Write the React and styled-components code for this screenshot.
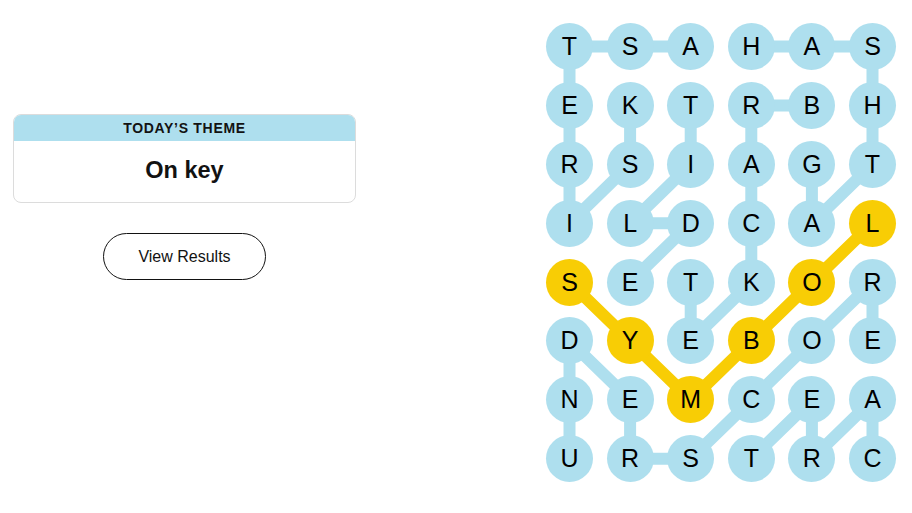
import React from 'react';
import styled, { createGlobalStyle } from 'styled-components';

const GlobalStyle = createGlobalStyle`
  body {
    margin: 0;
    background: #ffffff;
    font-family: "Liberation Sans", Arial, sans-serif;
    color: #121212;
  }
`;

const BLUE = '#aedfee';
const YELLOW = '#f8cd05';
const CELL = 47;
const COL_STEP = 60.6;
const ROW_STEP = 58.9;

const letters = [
  'TSAHAS',
  'EKTRBH',
  'RSIAGT',
  'ILDCAL',
  'SETKOR',
  'DYEBOE',
  'NEMCEA',
  'URSTRC',
];

// found words, as [row, col] paths
const words = [
  { path: [[0, 2], [0, 1], [0, 0], [1, 0], [2, 0], [3, 0], [2, 1], [1, 1]] },
  { path: [[0, 3], [0, 4], [0, 5], [1, 5], [2, 5], [3, 4], [2, 4]] },
  { path: [[1, 4], [1, 3], [2, 3], [3, 3], [4, 3], [5, 2], [4, 2]] },
  { path: [[1, 2], [2, 2], [3, 1], [3, 2], [4, 1]] },
  { path: [[7, 0], [6, 0], [5, 0], [6, 1], [7, 1], [7, 2], [6, 3], [5, 4], [4, 5], [5, 5]] },
  { path: [[7, 5], [6, 5], [7, 4], [6, 4], [7, 3]] },
  { path: [[4, 0], [5, 1], [6, 2], [5, 3], [4, 4], [3, 5]], spangram: true },
];

const spangramCells = new Set(
  words.filter((w) => w.spangram).flatMap((w) => w.path.map(([r, c]) => `${r}-${c}`))
);

const cx = (c) => CELL / 2 + c * COL_STEP;
const cy = (r) => CELL / 2 + r * ROW_STEP;

const App = () => {
  return (
    <>
      <GlobalStyle />
      <Page>
        <Sidebar>
          <ThemeCard>
            <ThemeLabel>Today’s Theme</ThemeLabel>
            <ThemeTitle>On key</ThemeTitle>
          </ThemeCard>
          <ResultsButton>View Results</ResultsButton>
        </Sidebar>

        <Board>
          <Lines width={CELL + 5 * COL_STEP} height={CELL + 7 * ROW_STEP}>
            {words.map((w, i) => (
              <polyline
                key={i}
                points={w.path.map(([r, c]) => `${cx(c)},${cy(r)}`).join(' ')}
                fill="none"
                stroke={w.spangram ? YELLOW : BLUE}
                strokeWidth="12"
                strokeLinejoin="round"
              />
            ))}
          </Lines>
          <Grid>
            {letters.map((row, r) =>
              row.split('').map((ch, c) => (
                <Cell key={`${r}-${c}`} $spangram={spangramCells.has(`${r}-${c}`)}>
                  {ch}
                </Cell>
              ))
            )}
          </Grid>
        </Board>
      </Page>
    </>
  );
};

const Page = styled.div`
  display: flex;
  align-items: flex-start;
  padding: 23px 0 0 13px;
`;

const Sidebar = styled.div`
  width: 343px;
  margin-top: 91px;
  display: flex;
  flex-direction: column;
  align-items: center;
`;

const ThemeCard = styled.div`
  width: 100%;
  box-sizing: border-box;
  border: 1px solid #dcdcdc;
  border-radius: 8px;
  overflow: hidden;
`;

const ThemeLabel = styled.div`
  height: 26px;
  background: ${BLUE};
  display: flex;
  align-items: center;
  justify-content: center;
  text-transform: uppercase;
  font-size: 14px;
  font-weight: 600;
  letter-spacing: 0.7px;
  color: #121212;
`;

const ThemeTitle = styled.div`
  height: 61px;
  display: flex;
  align-items: center;
  justify-content: center;
  font-size: 23.5px;
  font-weight: 700;
  color: #121212;
  padding-bottom: 3px;
  box-sizing: border-box;
`;

const ResultsButton = styled.button`
  margin-top: 30px;
  width: 163px;
  height: 47px;
  border: 1px solid #121212;
  border-radius: 24px;
  background: #ffffff;
  font-family: "Liberation Sans", Arial, sans-serif;
  font-size: 16px;
  color: #121212;
  cursor: pointer;
`;

const Board = styled.div`
  position: relative;
  margin-left: 190px;
`;

const Lines = styled.svg`
  position: absolute;
  left: 0;
  top: 0;
`;

const Grid = styled.div`
  position: relative;
  display: grid;
  grid-template-columns: repeat(6, ${CELL}px);
  grid-auto-rows: ${CELL}px;
  column-gap: ${COL_STEP - CELL}px;
  row-gap: ${ROW_STEP - CELL}px;
`;

const Cell = styled.div`
  width: ${CELL}px;
  height: ${CELL}px;
  border-radius: 50%;
  background: ${({ $spangram }) => ($spangram ? YELLOW : BLUE)};
  display: flex;
  align-items: center;
  justify-content: center;
  font-size: 25px;
  color: #000000;
  user-select: none;
`;

export default App;
